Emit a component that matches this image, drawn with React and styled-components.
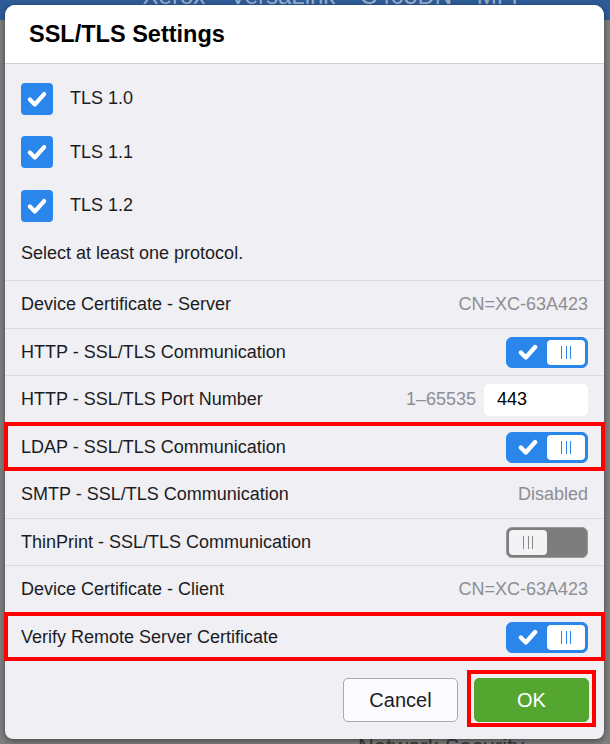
import styled, { createGlobalStyle } from "styled-components"

const GlobalStyle = createGlobalStyle`
    html, body {
        margin: 0;
        padding: 0;
        background: #7f7f7f;
    }
    body {
        font-family: "Liberation Sans", Arial, sans-serif;
        color: #1c1c1e;
    }
`

const Page = styled.div`
    position: relative;
    width: 610px;
    height: 744px;
    overflow: hidden;
    background: #7f7f7f;
    display: flex;
    flex-direction: column;
`

const Banner = styled.div`
    height: 20px;
    background: #2d5c97;
    display: flex;
    align-items: flex-end;
    justify-content: center;
    overflow: hidden;
`

const BannerText = styled.span`
    font-size: 24px;
    line-height: 24px;
    padding: 0 0 12px 60px;
    color: #9bb0cc;
    word-spacing: 18px;
`

const Spacer = styled.div`
    flex: 1;
`

const BackText = styled.div`
    font-size: 22px;
    line-height: 22px;
    height: 8px;
    padding-left: 358px;
    color: #3a3a3a;
`

const Modal = styled.div`
    position: absolute;
    top: 5px;
    left: 5px;
    width: 599px;
    height: 734px;
    background: #efeff4;
    border-radius: 10px 10px 8px 8px;
    box-shadow: 0 2px 6px rgba(0, 0, 0, 0.45);
    display: flex;
    flex-direction: column;
`

const Header = styled.div`
    height: 58px;
    flex-shrink: 0;
    display: flex;
    align-items: center;
    padding: 0 24px;
    background: #fff;
    border-bottom: 1px solid #cfcfd4;
    border-radius: 10px 10px 0 0;
`

const Title = styled.h1`
    margin: 0;
    font-size: 23.5px;
    font-weight: 700;
    color: #000;
`

const Checks = styled.div`
    padding: 8px 16px 0;
`

const CheckRow = styled.label`
    height: 53.5px;
    display: flex;
    align-items: center;
    gap: 17px;
    font-size: 18px;
`

const Box = styled.span`
    width: 32px;
    height: 32px;
    border-radius: 4px;
    background: #2a86eb;
    display: flex;
    align-items: center;
    justify-content: center;
`

const Hint = styled.p`
    margin: 0;
    padding: 9.5px 16px 16px;
    font-size: 18px;
    line-height: 22px;
`

const Row = styled.div`
    height: 47.5px;
    box-sizing: border-box;
    border-top: 1px solid #d9d9de;
    display: flex;
    align-items: center;
    justify-content: space-between;
    padding: 1px 16px 0;
    font-size: 18px;
    background: #efeff4;
    ${p => p.marked && `
        position: relative;
        z-index: 1;
        outline: 4px solid #ff0000;
        outline-offset: -3px;
    `}
`

const Value = styled.span`
    color: #8e8e93;
`

const PortGroup = styled.div`
    display: flex;
    align-items: center;
    gap: 8px;
`

const PortInput = styled.input`
    width: 104px;
    height: 32px;
    box-sizing: border-box;
    border: none;
    border-radius: 5px;
    background: #fff;
    padding: 0 13px;
    font-family: inherit;
    font-size: 18px;
    color: #000;
`

const Toggle = styled.div`
    width: 82px;
    height: 31px;
    box-sizing: border-box;
    border-radius: 6px;
    padding: 2px;
    background: ${p => (p.on ? "#2a86eb" : "#7d7d7d")};
    border: 1px solid ${p => (p.on ? "#2a86eb" : "#9a9a9a")};
    display: flex;
    flex-direction: ${p => (p.on ? "row" : "row-reverse")};
    align-items: stretch;
`

const Mark = styled.div`
    flex: 1;
    display: flex;
    align-items: center;
    justify-content: center;
`

const Thumb = styled.div`
    width: 38px;
    border-radius: 4px;
    background: ${p => (p.on ? "#fff" : "#f3f3f6")};
    display: flex;
    align-items: center;
    justify-content: center;
    gap: 3.5px;
`

const Bar = styled.span`
    width: 1px;
    height: 13px;
    background: ${p => (p.on ? "#2a86eb" : "#8a8a8a")};
`

const Footer = styled.div`
    flex: 1;
    display: flex;
    justify-content: flex-end;
    align-items: flex-start;
    gap: 9px;
    padding: 9px 8px 0;
    border-top: 1px solid #d9d9de;
`

const Highlight = styled.div`
    padding: ${p => (p.marked ? "4px 3px 1px" : "8px 0 5px")};
    border: ${p => (p.marked ? "4px solid #ff0000" : "none")};
`

const Button = styled.button`
    display: block;
    width: 115px;
    height: 44px;
    border-radius: 5px;
    font-family: inherit;
    font-size: 20px;
    cursor: pointer;
    border: 1px solid ${p => (p.primary ? "#52a22e" : "#a9a9ae")};
    background: ${p => (p.primary ? "#55a630" : "#fbfbfd")};
    color: ${p => (p.primary ? "#fff" : "#1c1c1e")};
`

const Check = ({ size = 20, width = 3.6 }) => (
    <svg width={size} height={size} viewBox="0 0 20 20">
        <path
            d="M3.5 10.5 L8 15 L16.5 5.5"
            fill="none"
            stroke="#fff"
            strokeWidth={width}
            strokeLinecap="round"
            strokeLinejoin="round"
        />
    </svg>
)

const Switch = ({ on }) => (
    <Toggle on={on}>
        <Mark>{on && <Check size={22} width={4} />}</Mark>
        <Thumb on={on}>
            <Bar on={on} />
            <Bar on={on} />
            <Bar on={on} />
        </Thumb>
    </Toggle>
)

const protocols = ["TLS 1.0", "TLS 1.1", "TLS 1.2"]

const App = () => {
  return (
    <Page>
        <GlobalStyle />
        <Banner>
            <BannerText>Xerox VersaLink C405DN MFP</BannerText>
        </Banner>
        <Spacer />
        <BackText>Network Security</BackText>

        <Modal>
            <Header>
                <Title>SSL/TLS Settings</Title>
            </Header>
            <Checks>
                {protocols.map(p => (
                    <CheckRow key={p}>
                        <Box><Check size={22} width={3.8} /></Box>
                        {p}
                    </CheckRow>
                ))}
            </Checks>
            <Hint>Select at least one protocol.</Hint>
            <Row>
                Device Certificate - Server
                <Value>CN=XC-63A423</Value>
            </Row>
            <Row>
                HTTP - SSL/TLS Communication
                <Switch on />
            </Row>
            <Row>
                HTTP - SSL/TLS Port Number
                <PortGroup>
                    <Value>1–65535</Value>
                    <PortInput defaultValue="443" />
                </PortGroup>
            </Row>
            <Row marked>
                LDAP - SSL/TLS Communication
                <Switch on />
            </Row>
            <Row>
                SMTP - SSL/TLS Communication
                <Value>Disabled</Value>
            </Row>
            <Row>
                ThinPrint - SSL/TLS Communication
                <Switch on={false} />
            </Row>
            <Row>
                Device Certificate - Client
                <Value>CN=XC-63A423</Value>
            </Row>
            <Row marked>
                Verify Remote Server Certificate
                <Switch on />
            </Row>
            <Footer>
                <Highlight>
                    <Button>Cancel</Button>
                </Highlight>
                <Highlight marked>
                    <Button primary>OK</Button>
                </Highlight>
            </Footer>
        </Modal>
    </Page>
  )
}

export default App
